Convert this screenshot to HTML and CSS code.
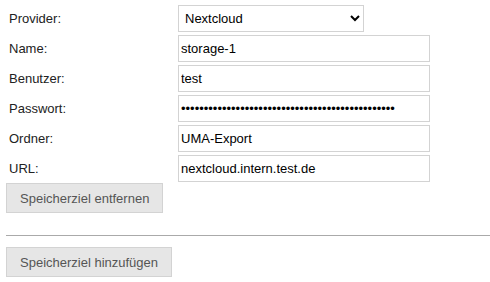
FILE: index.html
```html
<!DOCTYPE html>
<html lang="de">
<head>
  <meta charset="UTF-8">
  <title>Speicherziele</title>
  <link rel="stylesheet" href="styles.css">
</head>
<body>
  <div class="targets">
    <div class="target">
      <form class="target-form">
        <label for="provider">Provider:</label>
        <div class="field">
          <select id="provider" class="select">
            <option>Nextcloud</option>
            <option>WebDAV</option>
          </select>
        </div>
        <label for="name">Name:</label>
        <div class="field"><input type="text" id="name" value="storage-1"></div>
        <label for="user">Benutzer:</label>
        <div class="field"><input type="text" id="user" value="test"></div>
        <label for="pass">Passwort:</label>
        <div class="field"><input type="password" id="pass" value="geheimespasswortgeheimespasswortgeheim123456789"></div>
        <label for="folder">Ordner:</label>
        <div class="field"><input type="text" id="folder" value="UMA-Export"></div>
        <label for="url">URL:</label>
        <div class="field"><input type="text" id="url" value="nextcloud.intern.test.de"></div>
      </form>
      <button type="button" class="btn">Speicherziel entfernen</button>
    </div>
    <hr class="divider">
    <button type="button" class="btn">Speicherziel hinzufügen</button>
  </div>
</body>
</html>
```
FILE: styles.css
```css
body {
  margin: 0;
  padding: 5px 0 0 6px;
  font-family: "Liberation Sans", Arial, sans-serif;
  font-size: 13px;
  color: #222;
  background: #fff;
}
.target-form {
  display: grid;
  grid-template-columns: 172px 252px;
  grid-auto-rows: 27px;
  row-gap: 3px;
  margin: 0;
}
.target-form label {
  display: flex;
  align-items: center;
  padding-left: 3px;
}
.field {
  display: flex;
}
.target-form input,
.target-form select {
  box-sizing: border-box;
  height: 27px;
  border: 1px solid #d3d3d3;
  border-radius: 0;
  background: #fff;
  color: #000;
  font-family: "Liberation Sans", Arial, sans-serif;
  font-size: 13px;
  margin: 0;
}
.target-form input {
  width: 252px;
  padding: 0 2px;
}
.target-form select {
  width: 186px;
  padding: 0 2px;
}
.btn {
  box-sizing: border-box;
  height: 30px;
  margin-top: 1px;
  padding: 0 13px;
  border: 1px solid #d3d3d3;
  background: #e6e6e6;
  color: #555;
  font-family: "Liberation Sans", Arial, sans-serif;
  font-size: 13px;
  cursor: pointer;
}
.divider {
  border: none;
  border-top: 1px solid #aaa;
  margin: 22px 0 10px 0;
}
```
